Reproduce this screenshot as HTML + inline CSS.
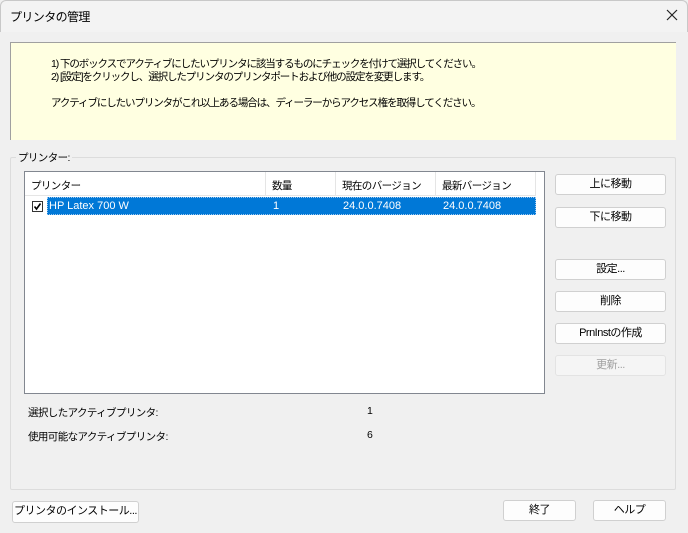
<!DOCTYPE html>
<html><head><meta charset="utf-8"><style>
*{box-sizing:border-box;margin:0;padding:0}
body{width:688px;height:533px;background:#f0f0f0;font-family:"Liberation Sans","Noto Sans CJK JP",sans-serif;font-size:10.5px;color:#000;position:relative;overflow:hidden}
.a{position:absolute;white-space:nowrap}
.j{letter-spacing:-0.6px}
.k{letter-spacing:-1.1px}
.btn{position:absolute;background:#fdfdfd;border:1px solid #d0d0d0;border-radius:3px;text-align:center;line-height:19px;font-size:11px;letter-spacing:-0.5px}
.dis{background:#f5f5f5;color:#a0a0a0;border-color:#e3e3e3}
</style></head><body>
<div class="a" style="left:0;top:0;width:688px;height:32px;background:#f3f3f3;border:1px solid #c8c8c8;border-bottom:none;border-radius:6px 6px 0 0"></div>
<div class="a j" style="left:10px;top:8px;font-size:12px">プリンタの管理</div>
<svg class="a" style="left:666px;top:9px" width="12" height="12"><path d="M1 1L11 11M11 1L1 11" stroke="#222" stroke-width="1.2"/></svg>
<div class="a" style="left:10px;top:42px;width:666px;height:98px;background:#ffffe1;border:1px solid #a0a0a0;border-bottom:none;border-right:none"></div>
<div class="a k" style="left:51px;top:56px">1) 下のボックスでアクティブにしたいプリンタに該当するものにチェックを付けて選択してください。</div>
<div class="a k" style="left:51px;top:69px">2) [設定]をクリックし、選択したプリンタのプリンタポートおよび他の設定を変更します。</div>
<div class="a k" style="left:51px;top:95px">アクティブにしたいプリンタがこれ以上ある場合は、ディーラーからアクセス権を取得してください。</div>
<div class="a" style="left:10px;top:157px;width:666px;height:333px;border:1px solid #dcdcdc;border-radius:2px"></div>
<div class="a j" style="left:16px;top:150px;background:#f0f0f0;padding:0 2px">プリンター:</div>
<div class="a" style="left:24px;top:171px;width:521px;height:223px;background:#fff;border:1px solid #828790"></div>
<div class="a" style="left:25px;top:172px;width:510px;height:24px;border-bottom:1px solid #e5e5e5"></div>
<div class="a" style="left:265px;top:172px;width:1px;height:24px;background:#e5e5e5"></div>
<div class="a" style="left:335px;top:172px;width:1px;height:24px;background:#e5e5e5"></div>
<div class="a" style="left:435px;top:172px;width:1px;height:24px;background:#e5e5e5"></div>
<div class="a" style="left:535px;top:172px;width:1px;height:24px;background:#e5e5e5"></div>
<div class="a j" style="left:31px;top:178px">プリンター</div>
<div class="a j" style="left:272px;top:178px">数量</div>
<div class="a j" style="left:342px;top:178px">現在のバージョン</div>
<div class="a j" style="left:442px;top:178px">最新バージョン</div>
<div class="a" style="left:32px;top:201px;width:11px;height:11px;border:1px solid #333;background:#fff"></div>
<svg class="a" style="left:33px;top:202px" width="9" height="9"><path d="M1.5 4.5L3.5 7L7.5 1.5" stroke="#000" stroke-width="1.6" fill="none"/></svg>
<div class="a" style="left:47px;top:197px;width:489px;height:18px;background:#0078d7;border:1px dotted #9cc8f0"></div>
<div class="a" style="left:49px;top:200px;color:#fff;font-size:11px">HP Latex 700 W</div>
<div class="a" style="left:273px;top:200px;color:#fff;font-size:11px">1</div>
<div class="a" style="left:343px;top:200px;color:#fff;font-size:11px">24.0.0.7408</div>
<div class="a" style="left:443px;top:200px;color:#fff;font-size:11px">24.0.0.7408</div>
<div class="btn" style="left:555px;top:174px;width:111px;height:21px">上に移動</div>
<div class="btn" style="left:555px;top:207px;width:111px;height:21px">下に移動</div>
<div class="btn" style="left:555px;top:259px;width:111px;height:21px">設定...</div>
<div class="btn" style="left:555px;top:291px;width:111px;height:21px">削除</div>
<div class="btn" style="left:555px;top:323px;width:111px;height:21px">PrnInstの作成</div>
<div class="btn dis" style="left:555px;top:355px;width:111px;height:21px">更新...</div>
<div class="a j" style="left:28px;top:405px">選択したアクティブプリンタ:</div>
<div class="a" style="left:367px;top:405px">1</div>
<div class="a j" style="left:28px;top:429px">使用可能なアクティブプリンタ:</div>
<div class="a" style="left:367px;top:429px">6</div>
<div class="btn" style="left:12px;top:501px;width:127px;height:22px">プリンタのインストール...</div>
<div class="btn" style="left:503px;top:500px;width:73px;height:21px">終了</div>
<div class="btn" style="left:593px;top:500px;width:73px;height:21px">ヘルプ</div>
</body></html>
